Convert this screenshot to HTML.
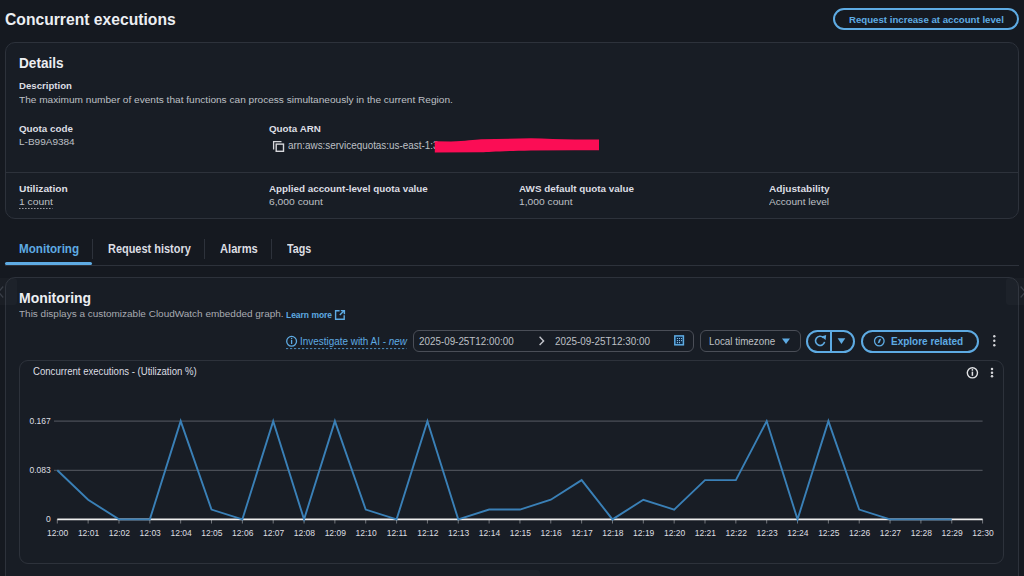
<!DOCTYPE html>
<html><head><meta charset="utf-8">
<style>
*{margin:0;padding:0;box-sizing:border-box}
html,body{width:1024px;height:576px;overflow:hidden;background:#151920;font-family:"Liberation Sans",sans-serif}
.a{position:absolute;white-space:nowrap;line-height:1;transform-origin:0 0}
.box{position:absolute}
svg{position:absolute;left:0;top:0}
text{font-family:"Liberation Sans",sans-serif}
</style></head><body>
<!-- cards -->
<div class="box" style="left:4.5px;top:41.5px;width:1014.5px;height:177px;border:1px solid #2d323b;border-radius:10px;background:#181d25"></div>
<div class="box" style="left:5px;top:172px;width:1014px;height:1px;background:#2d323b"></div>
<div class="box" style="left:5px;top:265px;width:1014px;height:1px;background:#2d323b"></div>
<div class="box" style="left:4.5px;top:277px;width:1014.5px;height:340px;border:1px solid #2d323b;border-radius:10px;background:#181d25"></div>
<div class="box" style="left:19.3px;top:359.5px;width:985px;height:204.5px;border:1px solid #2d323b;border-radius:9px"></div>
<!-- buttons -->
<div class="box" style="left:833px;top:8px;width:186.2px;height:22.3px;border:2px solid #5eabe3;border-radius:12px"></div>
<div class="box" style="left:5px;top:262px;width:87px;height:3.2px;background:#5eabe3;border-radius:2px"></div>
<div class="box" style="left:92px;top:239px;width:1px;height:20px;background:#2d323b"></div>
<div class="box" style="left:204px;top:239px;width:1px;height:20px;background:#2d323b"></div>
<div class="box" style="left:271px;top:239px;width:1px;height:20px;background:#2d323b"></div>
<div class="box" style="left:412.6px;top:330px;width:281.4px;height:21.5px;border:1px solid #4a4e57;border-radius:6px"></div>
<div class="box" style="left:699.5px;top:330px;width:101px;height:21.5px;border:1px solid #4a4e57;border-radius:6px"></div>
<div class="box" style="left:806.3px;top:329.7px;width:49.2px;height:23px;border:2px solid #5eabe3;border-radius:12px"></div>
<div class="box" style="left:830.3px;top:330px;width:1.5px;height:22px;background:#5eabe3"></div>
<div class="box" style="left:861px;top:329.7px;width:117.6px;height:23px;border:2px solid #5eabe3;border-radius:12px"></div>


<div class="box" style="left:0;top:278px;width:17px;height:27px;background:rgba(255,255,255,0.025);border-radius:0 3px 3px 0"></div>
<div class="box" style="left:1006px;top:278px;width:18px;height:27px;background:rgba(255,255,255,0.025);border-radius:3px 0 0 3px"></div>
<div class="box" style="left:480px;top:570px;width:60px;height:6px;background:#1e232b;border-radius:3px 3px 0 0"></div>
<svg width="1024" height="576" viewBox="0 0 1024 576">
<line x1="54" y1="421.1" x2="982.6" y2="421.1" stroke="#585c63" stroke-width="1"/>
<line x1="54" y1="470.3" x2="982.6" y2="470.3" stroke="#585c63" stroke-width="1"/>
<line x1="57.30" y1="519" x2="57.30" y2="523.5" stroke="#8a8d92" stroke-width="0.8"/>
<line x1="88.14" y1="519" x2="88.14" y2="523.5" stroke="#8a8d92" stroke-width="0.8"/>
<line x1="118.99" y1="519" x2="118.99" y2="523.5" stroke="#8a8d92" stroke-width="0.8"/>
<line x1="149.83" y1="519" x2="149.83" y2="523.5" stroke="#8a8d92" stroke-width="0.8"/>
<line x1="180.67" y1="519" x2="180.67" y2="523.5" stroke="#8a8d92" stroke-width="0.8"/>
<line x1="211.52" y1="519" x2="211.52" y2="523.5" stroke="#8a8d92" stroke-width="0.8"/>
<line x1="242.36" y1="519" x2="242.36" y2="523.5" stroke="#8a8d92" stroke-width="0.8"/>
<line x1="273.20" y1="519" x2="273.20" y2="523.5" stroke="#8a8d92" stroke-width="0.8"/>
<line x1="304.05" y1="519" x2="304.05" y2="523.5" stroke="#8a8d92" stroke-width="0.8"/>
<line x1="334.89" y1="519" x2="334.89" y2="523.5" stroke="#8a8d92" stroke-width="0.8"/>
<line x1="365.73" y1="519" x2="365.73" y2="523.5" stroke="#8a8d92" stroke-width="0.8"/>
<line x1="396.58" y1="519" x2="396.58" y2="523.5" stroke="#8a8d92" stroke-width="0.8"/>
<line x1="427.42" y1="519" x2="427.42" y2="523.5" stroke="#8a8d92" stroke-width="0.8"/>
<line x1="458.26" y1="519" x2="458.26" y2="523.5" stroke="#8a8d92" stroke-width="0.8"/>
<line x1="489.11" y1="519" x2="489.11" y2="523.5" stroke="#8a8d92" stroke-width="0.8"/>
<line x1="519.95" y1="519" x2="519.95" y2="523.5" stroke="#8a8d92" stroke-width="0.8"/>
<line x1="550.79" y1="519" x2="550.79" y2="523.5" stroke="#8a8d92" stroke-width="0.8"/>
<line x1="581.64" y1="519" x2="581.64" y2="523.5" stroke="#8a8d92" stroke-width="0.8"/>
<line x1="612.48" y1="519" x2="612.48" y2="523.5" stroke="#8a8d92" stroke-width="0.8"/>
<line x1="643.32" y1="519" x2="643.32" y2="523.5" stroke="#8a8d92" stroke-width="0.8"/>
<line x1="674.17" y1="519" x2="674.17" y2="523.5" stroke="#8a8d92" stroke-width="0.8"/>
<line x1="705.01" y1="519" x2="705.01" y2="523.5" stroke="#8a8d92" stroke-width="0.8"/>
<line x1="735.85" y1="519" x2="735.85" y2="523.5" stroke="#8a8d92" stroke-width="0.8"/>
<line x1="766.70" y1="519" x2="766.70" y2="523.5" stroke="#8a8d92" stroke-width="0.8"/>
<line x1="797.54" y1="519" x2="797.54" y2="523.5" stroke="#8a8d92" stroke-width="0.8"/>
<line x1="828.38" y1="519" x2="828.38" y2="523.5" stroke="#8a8d92" stroke-width="0.8"/>
<line x1="859.23" y1="519" x2="859.23" y2="523.5" stroke="#8a8d92" stroke-width="0.8"/>
<line x1="890.07" y1="519" x2="890.07" y2="523.5" stroke="#8a8d92" stroke-width="0.8"/>
<line x1="920.91" y1="519" x2="920.91" y2="523.5" stroke="#8a8d92" stroke-width="0.8"/>
<line x1="951.76" y1="519" x2="951.76" y2="523.5" stroke="#8a8d92" stroke-width="0.8"/>
<line x1="982.60" y1="519" x2="982.60" y2="523.5" stroke="#8a8d92" stroke-width="0.8"/>
<line x1="57.3" y1="519.4" x2="982.6" y2="519.4" stroke="#eeeeee" stroke-width="1.6"/>
<polyline points="57.30,470.25 88.14,499.74 118.99,519.40 149.83,519.40 180.67,421.10 211.52,509.57 242.36,519.40 273.20,421.10 304.05,519.40 334.89,421.10 365.73,509.57 396.58,519.40 427.42,421.10 458.26,519.40 489.11,509.57 519.95,509.57 550.79,499.74 581.64,480.08 612.48,519.40 643.32,499.74 674.17,509.57 705.01,480.08 735.85,480.08 766.70,421.10 797.54,519.40 828.38,421.10 859.23,509.57 890.07,519.40 920.91,519.40 951.76,519.40" fill="none" stroke="#3a80b7" stroke-width="1.9" stroke-linejoin="miter"/>
<text x="50.8" y="424.10" text-anchor="end" font-size="8.5" fill="#dedfe2">0.167</text>
<text x="50.8" y="473.10" text-anchor="end" font-size="8.5" fill="#dedfe2">0.083</text>
<text x="50.8" y="522.20" text-anchor="end" font-size="8.5" fill="#dedfe2">0</text>
<text x="57.70" y="535.6" text-anchor="middle" font-size="8.5" fill="#dedfe2">12:00</text>
<text x="88.54" y="535.6" text-anchor="middle" font-size="8.5" fill="#dedfe2">12:01</text>
<text x="119.39" y="535.6" text-anchor="middle" font-size="8.5" fill="#dedfe2">12:02</text>
<text x="150.23" y="535.6" text-anchor="middle" font-size="8.5" fill="#dedfe2">12:03</text>
<text x="181.07" y="535.6" text-anchor="middle" font-size="8.5" fill="#dedfe2">12:04</text>
<text x="211.92" y="535.6" text-anchor="middle" font-size="8.5" fill="#dedfe2">12:05</text>
<text x="242.76" y="535.6" text-anchor="middle" font-size="8.5" fill="#dedfe2">12:06</text>
<text x="273.60" y="535.6" text-anchor="middle" font-size="8.5" fill="#dedfe2">12:07</text>
<text x="304.45" y="535.6" text-anchor="middle" font-size="8.5" fill="#dedfe2">12:08</text>
<text x="335.29" y="535.6" text-anchor="middle" font-size="8.5" fill="#dedfe2">12:09</text>
<text x="366.13" y="535.6" text-anchor="middle" font-size="8.5" fill="#dedfe2">12:10</text>
<text x="396.98" y="535.6" text-anchor="middle" font-size="8.5" fill="#dedfe2">12:11</text>
<text x="427.82" y="535.6" text-anchor="middle" font-size="8.5" fill="#dedfe2">12:12</text>
<text x="458.66" y="535.6" text-anchor="middle" font-size="8.5" fill="#dedfe2">12:13</text>
<text x="489.51" y="535.6" text-anchor="middle" font-size="8.5" fill="#dedfe2">12:14</text>
<text x="520.35" y="535.6" text-anchor="middle" font-size="8.5" fill="#dedfe2">12:15</text>
<text x="551.19" y="535.6" text-anchor="middle" font-size="8.5" fill="#dedfe2">12:16</text>
<text x="582.04" y="535.6" text-anchor="middle" font-size="8.5" fill="#dedfe2">12:17</text>
<text x="612.88" y="535.6" text-anchor="middle" font-size="8.5" fill="#dedfe2">12:18</text>
<text x="643.72" y="535.6" text-anchor="middle" font-size="8.5" fill="#dedfe2">12:19</text>
<text x="674.57" y="535.6" text-anchor="middle" font-size="8.5" fill="#dedfe2">12:20</text>
<text x="705.41" y="535.6" text-anchor="middle" font-size="8.5" fill="#dedfe2">12:21</text>
<text x="736.25" y="535.6" text-anchor="middle" font-size="8.5" fill="#dedfe2">12:22</text>
<text x="767.10" y="535.6" text-anchor="middle" font-size="8.5" fill="#dedfe2">12:23</text>
<text x="797.94" y="535.6" text-anchor="middle" font-size="8.5" fill="#dedfe2">12:24</text>
<text x="828.78" y="535.6" text-anchor="middle" font-size="8.5" fill="#dedfe2">12:25</text>
<text x="859.63" y="535.6" text-anchor="middle" font-size="8.5" fill="#dedfe2">12:26</text>
<text x="890.47" y="535.6" text-anchor="middle" font-size="8.5" fill="#dedfe2">12:27</text>
<text x="921.31" y="535.6" text-anchor="middle" font-size="8.5" fill="#dedfe2">12:28</text>
<text x="952.16" y="535.6" text-anchor="middle" font-size="8.5" fill="#dedfe2">12:29</text>
<text x="983.00" y="535.6" text-anchor="middle" font-size="8.5" fill="#dedfe2">12:30</text>
<line x1="19" y1="208.5" x2="52.5" y2="208.5" stroke="#9a9ca2" stroke-width="1" stroke-dasharray="1.6,1.4"/>
<line x1="286" y1="348.6" x2="406.5" y2="348.6" stroke="#4d8dbd" stroke-width="1" stroke-dasharray="2.2,1.8"/>
<path d="M273.6,149.5 V141.6 H281.5" fill="none" stroke="#d6d7db" stroke-width="1.3"/>
<rect x="276.2" y="144.1" width="7.3" height="7.2" fill="none" stroke="#d6d7db" stroke-width="1.4"/>
<path d="M339.6,310.8 H335.6 V319.2 H344.2 V315.2" fill="none" stroke="#5eabe3" stroke-width="1.4"/>
<path d="M339.8,315 L344.3,310.5 M340.8,310.6 H344.4 V314.2" fill="none" stroke="#5eabe3" stroke-width="1.4"/>
<circle cx="291.6" cy="341.3" r="4.9" fill="none" stroke="#5eabe3" stroke-width="1.3"/>
<path d="M291.6,339.9 V344" stroke="#5eabe3" stroke-width="1.3"/><circle cx="291.6" cy="338.4" r="0.75" fill="#5eabe3"/>
<path d="M539.6,336.8 L543.6,340.9 L539.6,345" fill="none" stroke="#c4c6cc" stroke-width="1.4"/>
<rect x="674.8" y="335.9" width="8.6" height="8.9" fill="#0c2a48" stroke="#5eabe3" stroke-width="1.5"/>
<circle cx="677.40" cy="338.50" r="0.6" fill="#9fd0f5"/>
<circle cx="679.50" cy="338.50" r="0.6" fill="#9fd0f5"/>
<circle cx="681.60" cy="338.50" r="0.6" fill="#9fd0f5"/>
<circle cx="677.40" cy="340.60" r="0.6" fill="#9fd0f5"/>
<circle cx="679.50" cy="340.60" r="0.6" fill="#9fd0f5"/>
<circle cx="681.60" cy="340.60" r="0.6" fill="#9fd0f5"/>
<circle cx="677.40" cy="342.70" r="0.6" fill="#9fd0f5"/>
<circle cx="679.50" cy="342.70" r="0.6" fill="#9fd0f5"/>
<path d="M782,338.5 H790 L786,344 Z" fill="#5eabe3"/>
<path d="M823.4,337.6 A4.6,4.6 0 1 0 824.6,341.9" fill="none" stroke="#5eabe3" stroke-width="1.6"/>
<path d="M821.3,336.6 L826.2,335.0 L825.6,340.0 Z" fill="#5eabe3"/>
<path d="M837.6,338.3 H845.3 L841.45,344 Z" fill="#5eabe3"/>
<circle cx="879.3" cy="341.1" r="4.8" fill="none" stroke="#5eabe3" stroke-width="1.3"/>
<path d="M877.6,343.4 L879,339.5 L881.2,338.6 L879.8,342.6 Z" fill="#5eabe3"/>
<circle cx="994.3" cy="336.3" r="1.2" fill="#d4d5d9"/>
<circle cx="994.3" cy="340.8" r="1.2" fill="#d4d5d9"/>
<circle cx="994.3" cy="345.3" r="1.2" fill="#d4d5d9"/>
<circle cx="972.4" cy="372.8" r="5.1" fill="none" stroke="#e2e3e6" stroke-width="1.4"/>
<path d="M972.4,371.6 V375.8" stroke="#e2e3e6" stroke-width="1.5"/><circle cx="972.4" cy="369.9" r="0.85" fill="#e2e3e6"/>
<circle cx="992" cy="369.1" r="1.25" fill="#d4d5d9"/>
<circle cx="992" cy="372.7" r="1.25" fill="#d4d5d9"/>
<circle cx="992" cy="376.3" r="1.25" fill="#d4d5d9"/>
<path d="M3.2,286.5 L-1.5,292 L3.2,297.5" fill="none" stroke="#3a3f48" stroke-width="1.2"/>
<path d="M1020.6,286.5 L1025.3,292 L1020.6,297.5" fill="none" stroke="#3a3f48" stroke-width="1.2"/>
</svg>
<div id="t0" class="a" style="left:5.00px;top:10.91px;font-size:17px;font-weight:bold;color:#eceef2;transform:scaleX(0.9221);">Concurrent executions</div>
<div id="t1" class="a" style="left:849.00px;top:15.14px;font-size:9.4px;font-weight:bold;color:#5eabe3;transform:scaleX(1.0281);">Request increase at account level</div>
<div id="t2" class="a" style="left:19.40px;top:55.00px;font-size:15px;font-weight:bold;color:#eceef2;transform:scaleX(0.9070);">Details</div>
<div id="t3" class="a" style="left:19.40px;top:81.40px;font-size:9.8px;font-weight:bold;color:#dcdee3;transform:scaleX(0.9811);">Description</div>
<div id="t4" class="a" style="left:19.00px;top:95.81px;font-size:9.2px;font-weight:normal;color:#bec0c6;transform:scaleX(1.0991);">The maximum number of events that functions can process simultaneously in the current Region.</div>
<div id="t5" class="a" style="left:19.00px;top:123.70px;font-size:9.8px;font-weight:bold;color:#dcdee3;">Quota code</div>
<div id="t6" class="a" style="left:19.00px;top:138.21px;font-size:9.2px;font-weight:normal;color:#bec0c6;transform:scaleX(1.0896);">L-B99A9384</div>
<div id="t7" class="a" style="left:269.00px;top:123.50px;font-size:9.8px;font-weight:bold;color:#dcdee3;">Quota ARN</div>
<div id="t8" class="a" style="left:288.30px;top:141.13px;font-size:10px;font-weight:normal;color:#bec0c6;transform:scaleX(0.9881);">arn:aws:servicequotas:us-east-1:3</div>
<div id="t9" class="a" style="left:19.00px;top:183.60px;font-size:9.8px;font-weight:bold;color:#dcdee3;transform:scaleX(1.0432);">Utilization</div>
<div id="t10" class="a" style="left:19.00px;top:198.01px;font-size:9.2px;font-weight:normal;color:#bec0c6;transform:scaleX(1.1247);">1 count</div>
<div id="t11" class="a" style="left:269.00px;top:183.60px;font-size:9.8px;font-weight:bold;color:#dcdee3;transform:scaleX(1.0024);">Applied account-level quota value</div>
<div id="t12" class="a" style="left:269.00px;top:198.01px;font-size:9.2px;font-weight:normal;color:#bec0c6;transform:scaleX(1.1221);">6,000 count</div>
<div id="t13" class="a" style="left:519.00px;top:183.60px;font-size:9.8px;font-weight:bold;color:#dcdee3;transform:scaleX(1.0061);">AWS default quota value</div>
<div id="t14" class="a" style="left:519.00px;top:198.01px;font-size:9.2px;font-weight:normal;color:#bec0c6;transform:scaleX(1.1158);">1,000 count</div>
<div id="t15" class="a" style="left:768.50px;top:183.60px;font-size:9.8px;font-weight:bold;color:#dcdee3;transform:scaleX(1.0311);">Adjustability</div>
<div id="t16" class="a" style="left:768.50px;top:198.01px;font-size:9.2px;font-weight:normal;color:#bec0c6;transform:scaleX(1.0992);">Account level</div>
<div id="t17" class="a" style="left:18.70px;top:243.34px;font-size:12px;font-weight:bold;color:#5eabe3;transform:scaleX(0.9692);">Monitoring</div>
<div id="t18" class="a" style="left:108.00px;top:243.34px;font-size:12px;font-weight:bold;color:#dcdee3;transform:scaleX(0.9123);">Request history</div>
<div id="t19" class="a" style="left:220.00px;top:243.34px;font-size:12px;font-weight:bold;color:#dcdee3;transform:scaleX(0.9276);">Alarms</div>
<div id="t20" class="a" style="left:287.00px;top:243.34px;font-size:12px;font-weight:bold;color:#dcdee3;transform:scaleX(0.8927);">Tags</div>
<div id="t21" class="a" style="left:19.30px;top:290.77px;font-size:14.8px;font-weight:bold;color:#eceef2;transform:scaleX(0.9440);">Monitoring</div>
<div id="t22" class="a" style="left:19.30px;top:309.61px;font-size:9.2px;font-weight:normal;color:#a9abb2;transform:scaleX(1.0853);">This displays a customizable CloudWatch embedded graph.</div>
<div id="t23" class="a" style="left:285.90px;top:311.12px;font-size:8.6px;font-weight:bold;color:#5eabe3;transform:scaleX(0.9845);">Learn more</div>
<div id="t24" class="a" style="left:300.30px;top:335.91px;font-size:10.5px;font-weight:normal;color:#5eabe3;transform:scaleX(0.9446);">Investigate with AI - <i>new</i></div>
<div id="t25" class="a" style="left:419.20px;top:335.71px;font-size:10.5px;font-weight:normal;color:#bec0c6;transform:scaleX(0.9371);">2025-09-25T12:00:00</div>
<div id="t26" class="a" style="left:554.80px;top:335.71px;font-size:10.5px;font-weight:normal;color:#bec0c6;transform:scaleX(0.9401);">2025-09-25T12:30:00</div>
<div id="t27" class="a" style="left:709.00px;top:335.71px;font-size:10.5px;font-weight:normal;color:#bec0c6;transform:scaleX(0.9366);">Local timezone</div>
<div id="t28" class="a" style="left:891.20px;top:335.71px;font-size:10.5px;font-weight:bold;color:#5eabe3;transform:scaleX(0.9510);">Explore related</div>
<div id="t29" class="a" style="left:32.50px;top:366.21px;font-size:10.5px;font-weight:normal;color:#dcdee3;transform:scaleX(0.9139);">Concurrent executions - (Utilization %)</div>
<svg width="1024" height="576" viewBox="0 0 1024 576" style="position:absolute;left:0;top:0">
<path d="M434.8,141.2 L451,141.4 C465,141.1 475,139.5 481,139.2 L531,138.3 C545,138.5 560,139.5 575,139.6 L599,139.6 L599,150.3 L575,150.3 L531,150.5 C500,151.1 490,152.1 481,152.3 L434.8,152.4 Z" fill="#fb0d55"/>
</svg>
</body></html>
